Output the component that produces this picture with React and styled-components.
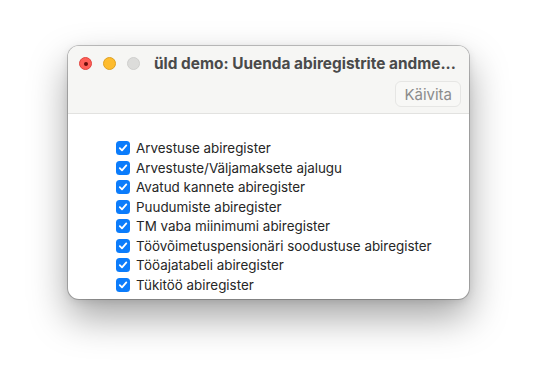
import React from 'react';
import styled, { createGlobalStyle } from 'styled-components';

const GlobalStyle = createGlobalStyle`
  html, body {
    margin: 0;
    padding: 0;
    background: #ffffff;
    font-family: "Inter", "Liberation Sans", sans-serif;
  }
`;

const Page = styled.div`
  width: 537px;
  height: 390px;
  display: flex;
  justify-content: center;
  align-items: flex-start;
  padding-top: 46px;
  box-sizing: border-box;
`;

const Window = styled.div`
  width: 401px;
  height: 253px;
  border-radius: 11px;
  background: #ffffff;
  box-shadow: 0 0 0 1px rgba(0, 0, 0, 0.22), 0 18px 38px rgba(0, 0, 0, 0.36), 0 2px 8px rgba(0, 0, 0, 0.1);
  overflow: hidden;
  display: flex;
  flex-direction: column;
`;

const TitleBar = styled.div`
  height: 68px;
  background: #f6f6f4;
  border-bottom: 1px solid #e2e2e0;
  display: flex;
  flex-direction: column;
  padding: 0 8px 0 11px;
  box-sizing: border-box;
`;

const TitleRow = styled.div`
  display: flex;
  align-items: center;
  height: 35px;
`;

const Lights = styled.div`
  display: flex;
  gap: 11px;
  margin-right: 14px;
`;

const Light = styled.span`
  width: 13px;
  height: 13px;
  border-radius: 50%;
  box-sizing: border-box;
  background: ${({ $c }) => $c};
  border: 0.5px solid ${({ $b }) => $b};
  display: flex;
  align-items: center;
  justify-content: center;
`;

const Dot = styled.span`
  width: 4px;
  height: 4px;
  border-radius: 50%;
  background: #6b0d0a;
`;

const Title = styled.div`
  font-size: 15.4px;
  font-weight: 700;
  color: #4a4a4a;
  white-space: nowrap;
  overflow: hidden;
`;

const ToolRow = styled.div`
  display: flex;
  justify-content: flex-end;
`;

const RunButton = styled.button`
  height: 26px;
  padding: 0 8px;
  border-radius: 6px;
  border: 1px solid #e6e6e4;
  background: #f8f8f6;
  color: #8c8c8c;
  font-family: "Inter", "Liberation Sans", sans-serif;
  font-size: 15px;
`;

const Content = styled.div`
  flex: 1;
  padding: 27px 0 0 48px;
  display: flex;
  flex-direction: column;
  gap: 5.5px;
`;

const Row = styled.label`
  display: flex;
  align-items: center;
  gap: 6px;
  height: 14px;
  font-size: 13.4px;
  color: #262626;
`;

const Box = styled.span`
  width: 14px;
  height: 14px;
  border-radius: 3.5px;
  background: #0b7cfb;
  display: flex;
  align-items: center;
  justify-content: center;
  flex-shrink: 0;
`;

const items = [
  'Arvestuse abiregister',
  'Arvestuste/Väljamaksete ajalugu',
  'Avatud kannete abiregister',
  'Puudumiste abiregister',
  'TM vaba miinimumi abiregister',
  'Töövõimetuspensionäri soodustuse abiregister',
  'Tööajatabeli abiregister',
  'Tükitöö abiregister',
];

const Check = () => (
  <Box>
    <svg width="10" height="10" viewBox="0 0 10 10">
      <path d="M1.8 5.2 L4 7.4 L8.3 2.4" fill="none" stroke="#fff" strokeWidth="1.8" strokeLinecap="round" strokeLinejoin="round" />
    </svg>
  </Box>
);

export default function App() {
  return (
    <>
      <GlobalStyle />
      <Page>
        <Window>
          <TitleBar>
            <TitleRow>
              <Lights>
                <Light $c="#fe5f57" $b="#e0443e"><Dot /></Light>
                <Light $c="#febc2e" $b="#dea123" />
                <Light $c="#dcdcda" $b="#cfcfcd" />
              </Lights>
              <Title>üld demo: Uuenda abiregistrite andme...</Title>
            </TitleRow>
            <ToolRow>
              <RunButton disabled>Käivita</RunButton>
            </ToolRow>
          </TitleBar>
          <Content>
            {items.map((t) => (
              <Row key={t}>
                <Check />
                {t}
              </Row>
            ))}
          </Content>
        </Window>
      </Page>
    </>
  );
}
